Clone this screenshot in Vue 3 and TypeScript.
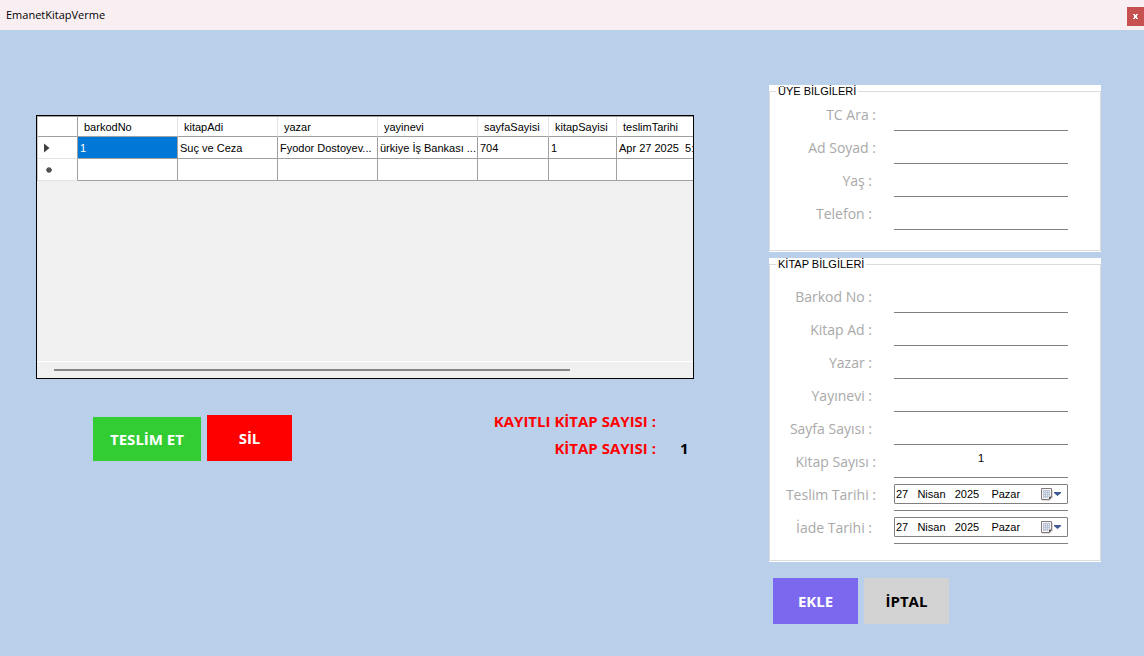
<script setup lang="ts">
import { ref, reactive } from 'vue'

interface Field {
  id: string
  label: string
  inset?: boolean
  kind?: 'date' | 'number'
}

const columns: string[] = ['barkodNo', 'kitapAdi', 'yazar', 'yayinevi', 'sayfaSayisi', 'kitapSayisi', 'teslimTarihi']
const rows: string[][] = [
  ['1', 'Suç ve Ceza', 'Fyodor Dostoyev...', 'ürkiye İş Bankası ...', '704', '1', 'Apr 27 2025  5:'],
]

const memberFields: Field[] = [
  { id: 'tc', label: 'TC Ara :' },
  { id: 'adSoyad', label: 'Ad Soyad :' },
  { id: 'yas', label: 'Yaş :', inset: true },
  { id: 'telefon', label: 'Telefon :', inset: true },
]

const bookFields: Field[] = [
  { id: 'barkod', label: 'Barkod No :', inset: true },
  { id: 'kitapAd', label: 'Kitap Ad :', inset: true },
  { id: 'yazar', label: 'Yazar :', inset: true },
  { id: 'yayinevi', label: 'Yayınevi :', inset: true },
  { id: 'sayfa', label: 'Sayfa Sayısı :', inset: true },
  { id: 'adet', label: 'Kitap Sayısı :', kind: 'number' },
  { id: 'teslim', label: 'Teslim Tarihi :', kind: 'date' },
  { id: 'iade', label: 'İade Tarihi :', inset: true, kind: 'date' },
]

const groups = [
  { title: 'ÜYE BİLGİLERİ', fields: memberFields, book: false },
  { title: 'KİTAP BİLGİLERİ', fields: bookFields, book: true },
]

const today = '27   Nisan   2025    Pazar'
const values = reactive<Record<string, string>>({ adet: '1', teslim: today, iade: today })
const selectedCell = ref('0-0')
const bookCount = ref(1)
</script>

<template>
  <div class="window">
    <header class="titlebar">
      <h1>EmanetKitapVerme</h1>
      <button type="button" class="close" aria-label="Kapat">
        <svg width="5" height="5" viewBox="0 0 5 5" shape-rendering="crispEdges">
          <path d="M0 0h2v1h-2zM3 0h2v1h-2zM1 1h3v1h-3zM1 2h3v1h-3zM1 3h3v1h-3zM0 4h2v1h-2zM3 4h2v1h-2z" fill="#fff" />
        </svg>
      </button>
    </header>

    <main>
      <section class="loans">
        <div class="grid-box">
          <div class="grid-view">
            <table>
              <colgroup>
                <col class="c-head" />
                <col class="c-wide" />
                <col class="c-wide" />
                <col class="c-wide" />
                <col class="c-wide" />
                <col class="c-page" />
                <col class="c-count" />
                <col />
              </colgroup>
              <thead>
                <tr>
                  <th class="corner"></th>
                  <th v-for="c in columns" :key="c" scope="col">{{ c }}</th>
                </tr>
              </thead>
              <tbody>
                <tr v-for="(row, r) in rows" :key="r">
                  <th class="marker" scope="row">
                    <svg width="6" height="10" viewBox="0 0 6 10"><path d="M0 0.5L5.5 5L0 9.5z" fill="#404040" /></svg>
                  </th>
                  <td
                    v-for="(cell, c) in row"
                    :key="c"
                    :class="{ selected: selectedCell === `${r}-${c}` }"
                    @click="selectedCell = `${r}-${c}`"
                  >{{ cell }}</td>
                </tr>
                <tr>
                  <th class="marker star" scope="row">
                    <svg width="6" height="6" viewBox="0 0 6 6">
                      <path d="M3 0v6M0 3h6M1 1l4 4M5 1l-4 4" stroke="#505050" stroke-width="1.3" />
                    </svg>
                  </th>
                  <td v-for="c in columns" :key="c"></td>
                </tr>
              </tbody>
            </table>
          </div>
          <div class="scrollbar"><div class="thumb"></div></div>
        </div>

        <div class="under">
          <div class="actions">
            <button type="button" class="btn deliver">TESLİM ET</button>
            <button type="button" class="btn delete">SİL</button>
          </div>
          <dl class="totals">
            <dt>KAYITLI KİTAP SAYISI :</dt>
            <dd></dd>
            <dt>KİTAP SAYISI :</dt>
            <dd>{{ bookCount }}</dd>
          </dl>
        </div>
      </section>

      <form class="side" @submit.prevent>
        <div v-for="g in groups" :key="g.title" class="group">
          <fieldset :class="{ book: g.book }">
            <legend>{{ g.title }}</legend>
            <div v-for="f in g.fields" :key="f.id" class="row">
              <label :for="f.id" :class="{ inset: f.inset }">{{ f.label }}</label>
              <div class="field">
                <div v-if="f.kind === 'date'" class="date">
                  <input :id="f.id" v-model="values[f.id]" type="text" />
                  <button type="button" aria-label="Takvimi aç">
                    <svg width="22" height="14" viewBox="0 0 22 14">
                      <path d="M2 13.5H10L12.5 11V3" fill="none" stroke="#dedada" />
                      <path d="M1.5 1.5H11.5V10L9.5 12.5H1.5z" fill="#f4f6fa" stroke="#857a7c" />
                      <path d="M3 3H10V9H8.5V11H3z" fill="#bcc5d6" />
                      <path d="M4 4h1v1h-1zM6 4h1v1h-1zM8 4h1v1h-1zM4 6h1v1h-1zM6 6h1v1h-1zM8 6h1v1h-1zM4 8h1v1h-1zM6 8h1v1h-1zM8 8h1v1h-1zM4 10h1v1h-1zM6 10h1v1h-1z" fill="#e6ebf4" />
                      <path d="M11 10H9.5V12z" fill="#fff" stroke="#5b4f52" />
                      <path d="M14 5H21V6L17.5 9L14 6z" fill="#3f5a94" />
                    </svg>
                  </button>
                </div>
                <input
                  v-else
                  :id="f.id"
                  v-model="values[f.id]"
                  type="text"
                  class="line"
                  :class="{ number: f.kind === 'number' }"
                />
              </div>
            </div>
          </fieldset>
        </div>
        <div class="form-actions">
          <button type="submit" class="btn add">EKLE</button>
          <button type="button" class="btn cancel">İPTAL</button>
        </div>
      </form>
    </main>
  </div>
</template>

<style>
body {
  margin: 0;
  background: #bad0ea;
}
</style>

<style scoped>
* {
  box-sizing: border-box;
}

.window {
  min-height: 100vh;
  background: #bad0ea;
  color: #000;
  font: 11px/13px "Liberation Sans", Arial, sans-serif;
}

.titlebar {
  display: flex;
  justify-content: space-between;
  align-items: center;
  height: 30px;
  padding: 2px 0 0 6px;
  background: #f9eff3;
}

h1 {
  margin: 0 0 2px;
  font: 11px/16px "Open Sans", "Noto Sans", sans-serif;
}

button {
  padding: 0;
  border: 0;
  cursor: pointer;
}

input {
  padding: 0;
  border: 0;
  outline: 0;
  background: transparent;
  color: #000;
  font: inherit;
}

.close {
  display: flex;
  align-items: center;
  justify-content: center;
  width: 17px;
  height: 19px;
  background: #c75050;
}

main {
  display: grid;
  grid-template-columns: minmax(0, 1fr) 332px;
  gap: 75px;
  padding: 55px 43px 32px 36px;
}

.loans {
  padding-top: 30px;
}

.grid-box {
  display: flex;
  flex-direction: column;
  min-height: 264px;
  border: 1px solid #000;
  background: #f0f0f0;
}

.grid-view {
  flex: 1;
  overflow: hidden;
}

table {
  width: 100%;
  table-layout: fixed;
  border-collapse: separate;
  border-spacing: 0;
  border-top: 1px solid #a0a0a0;
  border-left: 1px solid #c8c8c8;
  background: #fff;
}

.c-head {
  width: 40px;
}

.c-wide {
  width: 100px;
}

.c-page {
  width: 71px;
}

.c-count {
  width: 68px;
}

th,
td {
  height: 22px;
  padding: 1px 0 0 2px;
  overflow: hidden;
  border-right: 1px solid #a0a0a0;
  border-bottom: 1px solid #a0a0a0;
  font-weight: normal;
  text-align: left;
  white-space: pre;
}

th:last-child,
td:last-child {
  border-right: 0;
}

thead th {
  height: 20px;
  padding-left: 6px;
  border-right-color: #e3e3e3;
}

thead .corner {
  border-right-color: #a0a0a0;
}

.marker {
  padding-left: 6px;
  border-bottom-color: #e3e3e3;
}

.star {
  padding-left: 8px;
}

th svg {
  display: block;
}

.selected {
  background: #0078d7;
  color: #fff;
}

.scrollbar {
  display: flex;
  align-items: center;
  height: 17px;
  padding: 0 17px;
  border-top: 1px solid #fff;
}

.thumb {
  width: 83%;
  height: 2px;
  background: #858585;
}

.under {
  display: flex;
  align-items: flex-start;
  justify-content: space-between;
}

.actions {
  display: flex;
  align-items: flex-end;
  gap: 6px;
  padding: 36px 0 0 57px;
}

.btn {
  width: 85px;
  height: 46px;
  color: #fff;
  font: bold 15px/20px "Open Sans", "Noto Sans", sans-serif;
}

.deliver {
  width: 108px;
  height: 44px;
  background: #32cd32;
}

.delete {
  background: #f00;
}

.add {
  background: #7b68ee;
}

.cancel {
  background: #d3d3d3;
  color: #000;
}

.totals {
  display: grid;
  grid-template-columns: auto 38px;
  margin: 29px 0 0;
  font: bold 15px/27px "Open Sans", "Noto Sans", sans-serif;
}

.totals dt {
  color: #f00;
  text-align: right;
}

.totals dd {
  margin: 0;
  padding-left: 24px;
}

.side {
  display: flex;
  flex-direction: column;
  gap: 6px;
}

.group {
  padding-bottom: 1px;
  background: #fff;
}

fieldset {
  min-width: 0;
  margin: 0;
  padding: 0 32px 20px 6px;
  border: 1px solid #dcdcdc;
}

fieldset.book {
  padding-top: 9px;
  padding-bottom: 16px;
}

legend {
  padding: 0 2px;
}

.row {
  display: flex;
  align-items: center;
  height: 33px;
}

label {
  flex: 1;
  padding-right: 18px;
  color: #a9a9a9;
  font: 14px/20px "Open Sans", "Noto Sans", sans-serif;
  text-align: right;
}

label.inset {
  padding-right: 22px;
}

.field {
  display: flex;
  align-items: center;
  width: 174px;
  height: 33px;
  border-bottom: 1px solid #808080;
}

.line {
  width: 100%;
  height: 24px;
}

.number {
  padding-bottom: 6px;
  text-align: center;
}

.date {
  display: flex;
  align-items: center;
  width: 100%;
  height: 20px;
  padding: 0 5px 0 1px;
  border: 1px solid #808080;
  border-radius: 1px;
}

.date input {
  flex: 1;
  min-width: 0;
}

.date button {
  display: flex;
  background: transparent;
}

.form-actions {
  display: flex;
  gap: 6px;
  padding: 10px 4px 0;
}
</style>
